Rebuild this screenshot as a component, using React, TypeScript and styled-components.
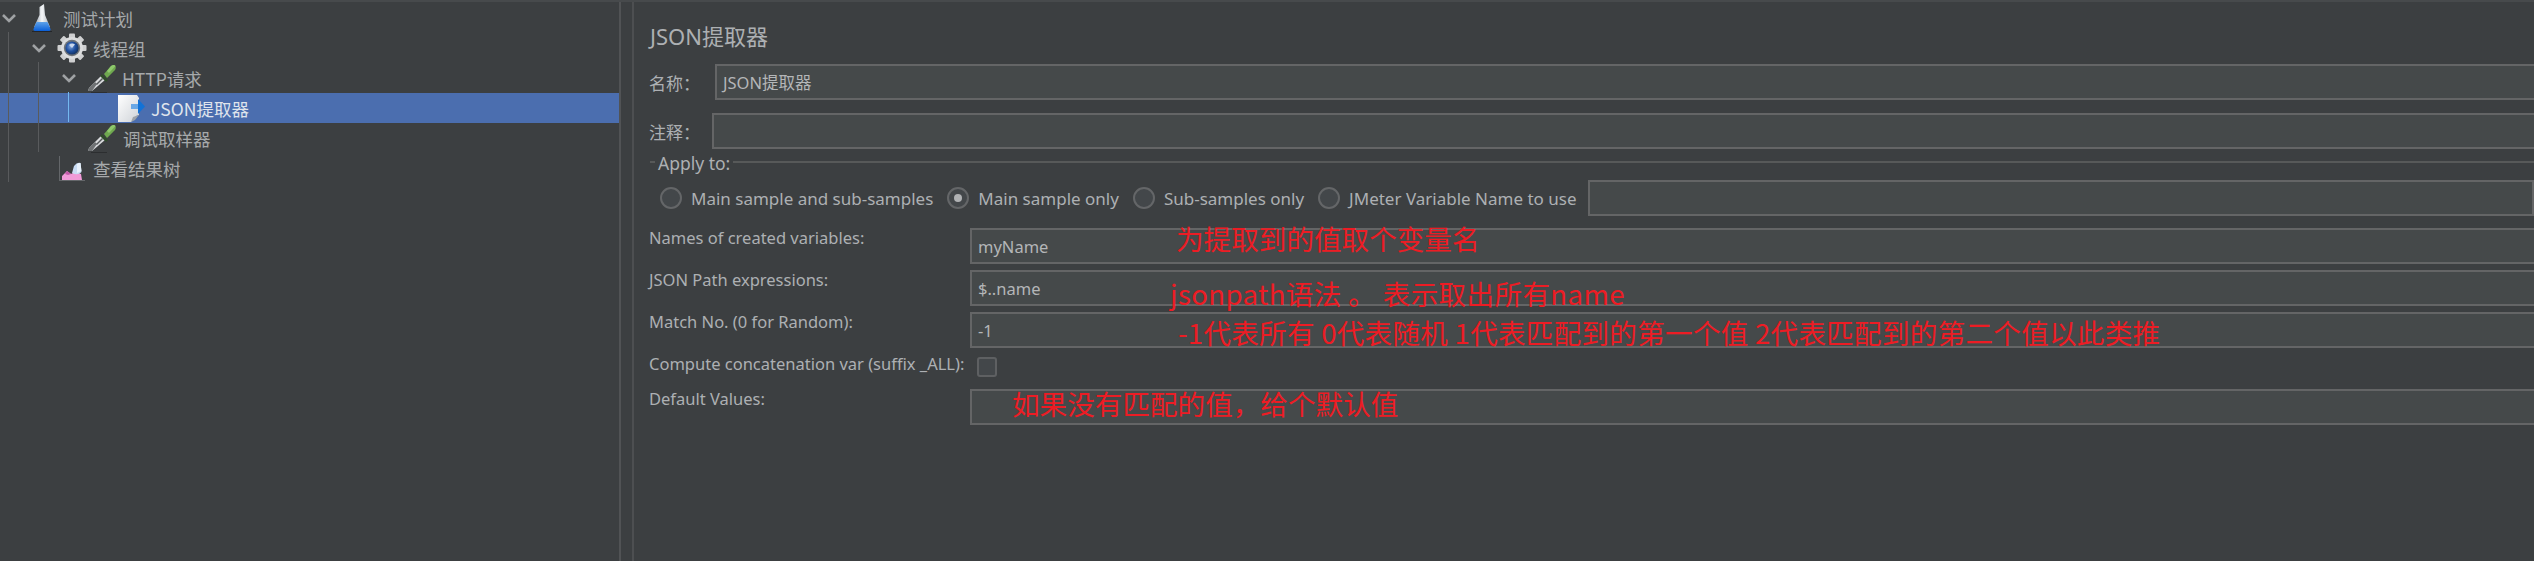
import React from 'react';
import styled, { createGlobalStyle } from 'styled-components';

const UI_FONT = '"Noto Sans", "Noto Sans CJK SC", sans-serif';
const CJK_FONT = '"Noto Sans CJK SC", "Noto Sans", sans-serif';

const GlobalStyle = createGlobalStyle`
    html, body {
        margin: 0;
        padding: 0;
        width: 2534px;
        height: 561px;
        overflow: hidden;
        background: #3c3f41;
    }
`;

const Shell = styled.div`
    position: relative;
    display: flex;
    width: 2534px;
    height: 561px;
    overflow: hidden;
    background: #3c3f41;
    border-top: 2px solid #474a4c;
    box-sizing: border-box;
    color: #adb0b3;
    font-family: ${UI_FONT};
`;

const TreePane = styled.aside`
    position: relative;
    flex: 0 0 621px;
    box-sizing: border-box;
    padding-top: 1px;
    border-right: 2px solid #515355;
`;

const Row = styled.div<{ $depth: number; $selected?: boolean }>`
    display: flex;
    align-items: center;
    height: 30px;
    padding-left: ${({ $depth }) => $depth * 30}px;
    background: ${({ $selected }) => ($selected ? '#4b6eaf' : 'transparent')};
    color: ${({ $selected }) => ($selected ? '#dfe4ec' : '#a6a9ab')};
    font-family: ${CJK_FONT};
    font-size: 17.5px;
    white-space: nowrap;
`;

const ChevronSlot = styled.span`
    flex: 0 0 18px;
    height: 18px;
    display: flex;
    align-items: center;
    justify-content: center;
`;

const IconSlot = styled.span<{ $gap: number }>`
    flex: 0 0 30px;
    height: 30px;
    margin: 0 ${({ $gap }) => $gap}px 0 9px;
`;

const Guide = styled.i<{ $x: number; $top: number; $h: number; $active?: boolean }>`
    position: absolute;
    left: ${({ $x }) => $x}px;
    top: ${({ $top }) => $top}px;
    width: 1px;
    height: ${({ $h }) => $h}px;
    background: ${({ $active }) => ($active ? '#74b8f0' : '#595b5d')};
`;

const Panel = styled.main`
    flex: 1;
    min-width: 0;
    box-sizing: border-box;
    margin-left: 11px;
    padding: 16px 0 0 15px;
    border-left: 2px solid #4d4f51;
`;

const Title = styled.h1`
    margin: 0 0 10px 1px;
    height: 36px;
    line-height: 36px;
    font-family: ${UI_FONT};
    font-size: 22px;
    font-weight: 400;
    color: #adb0b3;
`;

const NameRow = styled.div<{ $labelWidth: number; $gap: number }>`
    display: grid;
    grid-template-columns: ${({ $labelWidth }) => $labelWidth}px 1fr;
    align-items: center;
    margin: 0 -4px ${({ $gap }) => $gap}px 0;
    font-family: ${CJK_FONT};
    font-size: 17px;
`;

const Field = styled.div`
    height: 36px;
    box-sizing: border-box;
    padding-left: 6px;
    display: flex;
    align-items: center;
    background: #45494a;
    border: 2px solid #646566;
    font-family: ${UI_FONT};
    font-size: 16.5px;
    color: #b4b6b8;
    white-space: nowrap;
`;

const ApplyHeader = styled.div`
    display: flex;
    align-items: center;
    gap: 3px;
    height: 28px;
    margin-bottom: 3px;
    font-size: 17.5px;
    &::before {
        content: '';
        flex: 0 0 5px;
        height: 2px;
        margin: 0 0 2px 1px;
        background: #575959;
    }
    &::after {
        content: '';
        flex: 1;
        height: 2px;
        margin-bottom: 2px;
        background: #575959;
    }
`;

const ApplyRow = styled.div`
    display: flex;
    align-items: center;
    gap: 14px;
    height: 36px;
    padding-left: 11px;
    margin-bottom: 12px;
    font-size: 17px;
    white-space: nowrap;
`;

const RadioItem = styled.label`
    display: flex;
    align-items: center;
    gap: 9px;
`;

const RadioMark = styled.span<{ $checked?: boolean }>`
    flex: 0 0 22px;
    height: 22px;
    box-sizing: border-box;
    border: 2px solid #646668;
    border-radius: 50%;
    background: #43474a;
    display: flex;
    align-items: center;
    justify-content: center;
    &::after {
        content: '';
        display: ${({ $checked }) => ($checked ? 'block' : 'none')};
        width: 8px;
        height: 8px;
        border-radius: 50%;
        background: #b0b2b4;
    }
`;

const VarField = styled(Field)`
    flex: 1;
    margin-left: -3px;
`;

const FormGrid = styled.div`
    display: grid;
    grid-template-columns: 321px 1fr;
    grid-auto-rows: auto;
    row-gap: 6px;
    margin-right: -4px;
    font-size: 16.5px;
`;

const FieldLabel = styled.div`
    line-height: 20px;
    white-space: nowrap;
`;

const CheckBox = styled.span`
    display: block;
    width: 20px;
    height: 20px;
    box-sizing: border-box;
    margin: 3px 0 6px 7px;
    border: 2px solid #5e6062;
    border-radius: 3px;
    background: #43474a;
`;

const Note = styled.span<{ $x: number; $y: number; $spread?: number }>`
    position: absolute;
    left: ${({ $x }) => $x}px;
    top: ${({ $y }) => $y}px;
    line-height: 36px;
    font-family: ${CJK_FONT};
    font-size: 27.6px;
    letter-spacing: ${({ $spread }) => $spread ?? 0}px;
    color: #ed1c24;
    white-space: nowrap;
`;

const Chevron = () => (
    <svg width="16" height="10" viewBox="0 0 16 10">
        <polyline points="2,2 8,8 14,2" fill="none" stroke="#9fa2a4" strokeWidth="2.6" />
    </svg>
);

const FlaskIcon = () => (
    <svg width="30" height="30" viewBox="0 0 30 30">
        <defs>
            <linearGradient id="flaskGlass" x1="0" x2="1" y1="0" y2="0">
                <stop offset="0" stopColor="#8d96a0" />
                <stop offset="0.5" stopColor="#f4f6f8" />
                <stop offset="1" stopColor="#aab2ba" />
            </linearGradient>
            <linearGradient id="flaskLiquid" x1="0" x2="0" y1="0" y2="1">
                <stop offset="0" stopColor="#5ea2ea" />
                <stop offset="1" stopColor="#0a5fd8" />
            </linearGradient>
        </defs>
        <path d="M12.5 4 L17 1 L18 12 L23 24 L7 24 L12.5 12 Z" fill="url(#flaskGlass)" />
        <path d="M9.5 19 L20.5 19 L23.5 26 Q24 28 21 28 L9 28 Q6 28 6.5 26 Z" fill="url(#flaskLiquid)" />
        <rect x="5" y="28" width="20" height="1" fill="#23262a" />
    </svg>
);

const GearIcon = () => (
    <svg width="30" height="30" viewBox="0 0 30 30">
        <defs>
            <radialGradient id="gearHub" cx="0.4" cy="0.4" r="0.65">
                <stop offset="0" stopColor="#7ea2d8" />
                <stop offset="0.55" stopColor="#1f4f9e" />
                <stop offset="1" stopColor="#12305e" />
            </radialGradient>
        </defs>
        <g fill="#cfd0d1">
            {[0, 45, 90, 135, 180, 225, 270, 315].map((a) => (
                <rect key={a} x="12" y="0.5" width="6" height="7" rx="1" transform={`rotate(${a} 15 15)`} />
            ))}
        </g>
        <circle cx="15" cy="15" r="11" fill="#dcddde" />
        <circle cx="15" cy="15" r="8.2" fill="#6d7278" />
        <circle cx="15" cy="15" r="6.6" fill="url(#gearHub)" />
        <path d="M12 12 A5 5 0 0 1 18 11.5 L15 15 Z" fill="#c8d6ec" />
    </svg>
);

const DropperIcon = () => (
    <svg width="30" height="30" viewBox="0 0 30 30">
        <path d="M1 28 L2 25 L14 13 L18 17 L5 28 Z" fill="#d8dadc" />
        <path d="M1 28 L2 25 L8 19 L10 21 L5 28 Z" fill="#6f7274" />
        <path d="M9 21 L15 15 L16 16 L10 22 Z" fill="#55585b" />
        <path d="M15 11 L21 17 L19 19 L13 13 Z" fill="#2f4a2a" />
        <path d="M17 11 L24 3 Q27 1 28.5 3 Q29.5 6 27 8 L20 15 Z" fill="#6fa84f" />
        <path d="M24 3 Q27 1 28.5 3 L22 10 L20 8 Z" fill="#8fc96d" />
        <rect x="4" y="29" width="16" height="1" fill="#2c2e30" />
    </svg>
);

const DocIcon = () => (
    <svg width="30" height="30" viewBox="0 0 30 30">
        <defs>
            <linearGradient id="docPage" x1="0" x2="1" y1="0" y2="1">
                <stop offset="0" stopColor="#ffffff" />
                <stop offset="1" stopColor="#cfd3d8" />
            </linearGradient>
        </defs>
        <path d="M1 2 L20 2 L22 5 L22 22 L19 23 L18 26 L14 29 L1 29 Z" fill="url(#docPage)" />
        <path d="M14 29 L16 24 L22 22 L18 27 Z" fill="#9ea3a9" />
        <path d="M14 11 L21 11 L21 6 L28 13.5 L21 21 L21 16 L14 16 Z" fill="#1272d6" />
        <path d="M14 11 L21 11 L21 16 L14 16 Z" fill="#6aa8e6" />
    </svg>
);

const ResultIcon = () => (
    <svg width="30" height="30" viewBox="0 0 30 30">
        <rect x="2" y="3" width="1" height="25" fill="#64676a" />
        <rect x="2" y="27" width="26" height="1" fill="#64676a" />
        <path d="M5 27 L5 23 L10 18 L14 21 L18 19 L24 21 L25 27 Z" fill="#f09bd8" />
        <path d="M10 18 L14 21 L11 22 L8 21 Z" fill="#c05aa8" />
        <path d="M15 20 L17 13 Q20 9 23.5 10 L24.5 19 Q21 23 15 20 Z" fill="#c8dcf4" />
        <path d="M20 11 Q22 9.5 23.5 10 L24.5 18 L20 20 Z" fill="#e8f2fc" />
    </svg>
);

const treeItems = [
    { depth: 0, label: '测试计划', icon: <FlaskIcon />, open: true, gap: 6 },
    { depth: 1, label: '线程组', icon: <GearIcon />, open: true, gap: 6 },
    { depth: 2, label: 'HTTP请求', icon: <DropperIcon />, open: true, gap: 5 },
    { depth: 3, label: 'JSON提取器', icon: <DocIcon />, selected: true, gap: 4 },
    { depth: 2, label: '调试取样器', icon: <DropperIcon />, gap: 6 },
    { depth: 1, label: '查看结果树', icon: <ResultIcon />, gap: 6 },
];

const radios = [
    { label: 'Main sample and sub-samples' },
    { label: 'Main sample only', checked: true },
    { label: 'Sub-samples only' },
    { label: 'JMeter Variable Name to use' },
];

const App = () => (
    <>
        <GlobalStyle />
        <Shell>
            <TreePane>
                {treeItems.map((item) => (
                    <Row key={item.label} $depth={item.depth} $selected={item.selected}>
                        <ChevronSlot>{item.open && <Chevron />}</ChevronSlot>
                        <IconSlot $gap={item.gap}>{item.icon}</IconSlot>
                        {item.label}
                    </Row>
                ))}
                <Guide $x={8} $top={30} $h={150} />
                <Guide $x={38} $top={60} $h={90} />
                <Guide $x={68} $top={90} $h={30} $active />
            </TreePane>
            <Panel>
                <Title>JSON提取器</Title>
                <NameRow $labelWidth={66} $gap={13}>
                    <span>名称：</span>
                    <Field>JSON提取器</Field>
                </NameRow>
                <NameRow $labelWidth={63} $gap={0}>
                    <span>注释：</span>
                    <Field />
                </NameRow>
                <ApplyHeader>Apply to:</ApplyHeader>
                <ApplyRow>
                    {radios.map((radio) => (
                        <RadioItem key={radio.label}>
                            <RadioMark $checked={radio.checked} />
                            {radio.label}
                        </RadioItem>
                    ))}
                    <VarField />
                </ApplyRow>
                <FormGrid>
                    <FieldLabel>Names of created variables:</FieldLabel>
                    <Field>myName</Field>
                    <FieldLabel>JSON Path expressions:</FieldLabel>
                    <Field>$..name</Field>
                    <FieldLabel>Match No. (0 for Random):</FieldLabel>
                    <Field>-1</Field>
                    <FieldLabel>Compute concatenation var (suffix _ALL):</FieldLabel>
                    <CheckBox />
                    <FieldLabel>Default Values:</FieldLabel>
                    <Field />
                </FormGrid>
            </Panel>
            <Note $x={1176} $y={218}>为提取到的值取个变量名</Note>
            <Note $x={1170} $y={273} $spread={0.35}>jsonpath语法 。 表示取出所有name</Note>
            <Note $x={1178} $y={312} $spread={0.25}>-1代表所有 0代表随机 1代表匹配到的第一个值 2代表匹配到的第二个值以此类推</Note>
            <Note $x={1012} $y={383}>如果没有匹配的值，给个默认值</Note>
        </Shell>
    </>
);

export default App;
